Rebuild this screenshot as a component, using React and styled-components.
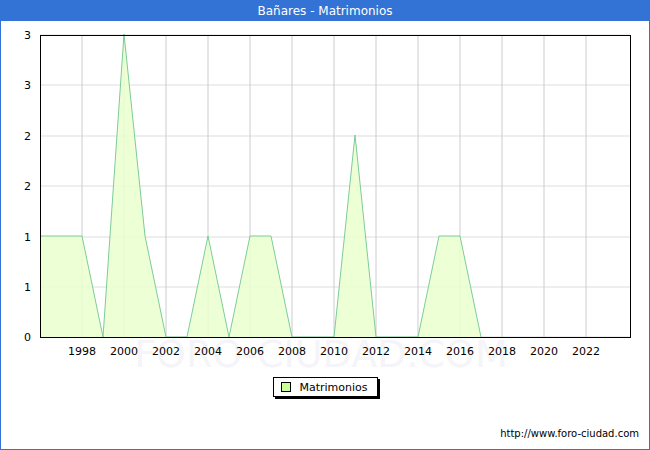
import React from "react";
import styled, { createGlobalStyle } from "styled-components";

const G = createGlobalStyle`
  html,body{margin:0;padding:0;background:#fff;}
  body{font-family:"DejaVu Sans",sans-serif;}
`;
const Frame = styled.div`
  width:650px;height:450px;box-sizing:border-box;border:1px solid #3373d5;
  display:flex;flex-direction:column;position:relative;background:#fff;
`;
const Title = styled.div`
  height:21px;background:#3373d5;color:#fff;font-size:12px;
  display:flex;align-items:center;justify-content:center;margin:-1px -1px 0;
`;
const Chart = styled.svg`display:block;`;
const LegendRow = styled.div`display:flex;justify-content:center;margin-top:4px;padding-left:1px;`;
const Legend = styled.div`
  display:flex;align-items:center;gap:8px;height:18px;padding:0 9px 0 7px;
  border:1px solid #000;box-shadow:2px 2px 0 #000;font-size:11px;color:#000;
`;
const Swatch = styled.span`width:8px;height:8px;border:1px solid #000;background:#ccff99;`;
const Footer = styled.div`
  position:absolute;right:10px;bottom:10px;font-size:10px;color:#000;
`;

const data = {1996:1,1997:1,1998:1,1999:0,2000:3,2001:1,2002:0,2003:0,2004:1,2005:0,2006:1,2007:1,2008:0,2009:0,2010:0,2011:2,2012:0,2013:0,2014:0,2015:1,2016:1,2017:0};
const X = (y) => 39 + (y - 1996) * 21;
const Y = (v) => 316 - v * 101;

export default function App() {
  const yrs = Object.keys(data).map(Number);
  const pts = yrs.map((y) => `${X(y)},${Y(data[y])}`).join(" ");
  const area = `${X(1996)},316 ${pts} ${X(2017)},316`;
  const ylab = [[3,14],[3,64],[2,115],[2,165],[1,216],[1,266],[0,316]];
  const xlab = [];
  for (let y = 1998; y <= 2022; y += 2) xlab.push(y);
  return (
    <Frame>
      <G />
      <Title>Bañares - Matrimonios</Title>
      <Chart width="648" height="352">
        <text x="320" y="346" textAnchor="middle" fontSize="38" fill="#f4f4f9" fontFamily="DejaVu Sans">FORO-CIUDAD.COM</text>
        {ylab.map(([v, y], i) => (
          <g key={i}>
            <line x1="39" x2="629" y1={y} y2={y} stroke="#ddd" />
            <text x="30" y={y + 4} textAnchor="end" fontSize="11" fill="#000">{v}</text>
          </g>
        ))}
        {xlab.map((y) => (
          <g key={y}>
            <line x1={X(y)} x2={X(y)} y1="14" y2="316" stroke="#ccc" />
            <text x={X(y)} y="334" textAnchor="middle" fontSize="11" fill="#000">{y}</text>
          </g>
        ))}
        <polygon points={area} fill="#eaffcc" opacity="0.85" />
        <polyline points={pts} fill="none" stroke="#7ccc99" strokeWidth="1" />
        <rect x="39.5" y="14.5" width="590" height="302" fill="none" stroke="#000" />
      </Chart>
      <LegendRow>
        <Legend><Swatch />Matrimonios</Legend>
      </LegendRow>
      <Footer>http://www.foro-ciudad.com</Footer>
    </Frame>
  );
}
